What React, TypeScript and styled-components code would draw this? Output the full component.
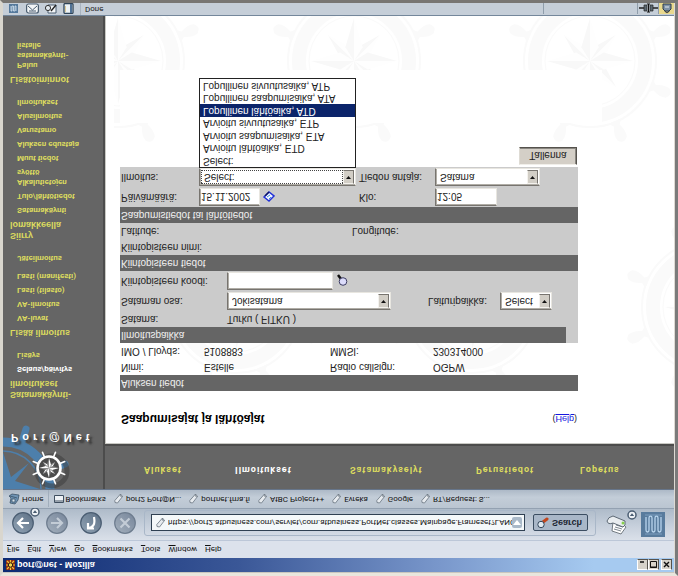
import React from "react";
import styled, { createGlobalStyle, css } from "styled-components";

const GlobalStyle = createGlobalStyle`
  * { box-sizing: border-box; }
  html, body { margin: 0; padding: 0; background: #808080; }
  body, button, input, select { font-family: "Liberation Sans", Arial, sans-serif; }
`;

const chromeFont = css`
  font-family: Roboto, "Liberation Sans", sans-serif;
`;

/* ---------- window ---------- */
const Window = styled.div`
  display: flex;
  flex-direction: column;
  min-height: 100vh;
  transform: scaleY(-1);
  background: #d8d5cd;
  border: 3px solid;
  border-color: #e9e6dd #7b7b7b #787673 #d9d6ce;
  box-shadow: inset -1px 0 #dedad4, inset 0 1px #c9c6be;
  padding: 1px 1px 0 0;
  font-size: 8px;
  line-height: 12px;
  color: #222;
`;

const TitleBar = styled.header`
  display: flex;
  align-items: center;
  height: 14px;
  padding: 0 2px 0 3px;
  background: linear-gradient(90deg, #0d2a72, #3a5797 35%, #7997cb 65%, #a6caf0 88%);
  color: #fff;
`;
const TitleText = styled.h1`
  flex: 1;
  margin: 0 0 0 2px;
  font-size: 9px;
  line-height: 12px;
  font-weight: 700;
`;
const CaptionButton = styled.button<{ $gap?: boolean }>`
  width: 11px;
  height: 11px;
  padding: 0;
  margin-left: ${(p) => (p.$gap ? 2 : 0)}px;
  border: 1px solid;
  border-color: #fff #55524d #55524d #fff;
  background: #d6d2ca;
  svg { display: block; }
`;

const MenuBar = styled.nav`
  display: flex;
  align-items: center;
  gap: 8px;
  height: 18px;
  padding-left: 4px;
  background: #dce2ec;
  border-bottom: 1px solid #bcc7d8;
`;
const MenuButton = styled.button`
  ${chromeFont}
  padding: 0;
  border: 0;
  background: none;
  color: #111;
  font-size: 8px;
  line-height: 12px;
  &::first-letter { text-decoration: underline; }
`;

const ToolBar = styled.div`
  display: flex;
  align-items: center;
  height: 32px;
  padding: 0 9px 0 8px;
  background: linear-gradient(#dae0e9, #c7d0dc 45%, #aebbc9);
  border-bottom: 1px solid #93a1b1;
`;
const RoundButton = styled.button`
  display: block;
  width: 24px;
  height: 24px;
  margin: 2px 10px 0 0;
  padding: 0;
  border: 0;
  background: none;
  svg { display: block; overflow: visible; }
`;
const AddressGroup = styled.form`
  display: flex;
  flex: 1;
  align-items: center;
  gap: 8px;
  height: 26px;
  margin: 3px 0 0 -3px;
  padding: 0 7px 0 6px;
  border: 1px solid #a9b7c8;
  border-radius: 3px;
`;
const AddressBox = styled.div`
  display: flex;
  flex: 1;
  align-items: center;
  height: 17px;
  padding: 0 2px 0 3px;
  border: 1px solid #2f4052;
  background: #f4f8fa;
`;
const AddressInput = styled.input`
  ${chromeFont}
  flex: 1;
  min-width: 0;
  height: 13px;
  margin-left: 2px;
  padding: 0;
  border: 0;
  outline: 0;
  background: none;
  color: #111;
  font-size: 8px;
`;
const DropButton = styled.button`
  width: 10px;
  height: 11px;
  padding: 0;
  border: 0;
  border-radius: 2px;
  background: #a9b9c9;
  svg { display: block; margin: auto; }
`;
const SearchButton = styled.button`
  display: flex;
  align-items: center;
  gap: 3px;
  width: 55px;
  height: 17px;
  padding: 0 3px;
  border: 1px solid #3b4d61;
  border-radius: 2px;
  background: #a9b7c8;
  color: #1a2430;
  font-size: 9px;
  font-weight: 700;
`;
const PrintButton = styled(RoundButton)`
  width: 32px;
  margin: 2px 4px 0 9px;
`;
const Throbber = styled.a`
  display: block;
  width: 24px;
  height: 25px;
  background: #587b9d;
  svg { display: block; }
`;

const BookmarkBar = styled.nav`
  ${chromeFont}
  display: flex;
  align-items: center;
  height: 19px;
  padding-left: 5px;
  background: linear-gradient(#bac5d1, #c3cdd8 60%, #adb9c7);
  border-bottom: 1px solid #66758a;
`;
const BookmarkLink = styled.a`
  display: flex;
  align-items: center;
  gap: 2px;
  margin-right: 7px;
  color: #111;
  text-decoration: none;
  white-space: nowrap;
`;
const HomeLink = styled(BookmarkLink)`
  height: 17px;
  margin-right: 5px;
  padding-right: 4px;
  border-right: 1px solid #a1aebc;
`;

const StatusBar = styled.footer`
  ${chromeFont}
  display: flex;
  align-items: center;
  height: 13px;
  padding-left: 5px;
  border-top: 1px solid #74879b;
  background: #c5ced8;
`;
const StatusButton = styled.button`
  display: block;
  width: 13px;
  height: 11px;
  margin-right: 5px;
  padding: 0;
  border: 0;
  background: none;
  svg { display: block; }
`;
const StatusText = styled.div`
  flex: 1;
  padding-left: 4px;
  border-left: 1px solid #a9b4c0;
`;
const StatusCell = styled.div<{ $width: number; $lit?: boolean }>`
  width: ${(p) => p.$width}px;
  height: 11px;
  border-left: 1px solid #8f9dab;
  background: ${(p) => (p.$lit ? "#e9d98e" : "none")};
  svg { display: block; margin: 0 auto; }
`;

/* ---------- page ---------- */
const Page = styled.div`
  display: grid;
  grid-template-columns: 102px 1fr;
  flex: 1;
  background: #656565;
`;
const SideBar = styled.aside`
  position: relative;
  overflow: hidden;
  border-right: 2px solid #4c4c4c;
`;
const BlueWheel = styled.svg`
  position: absolute;
  left: 0;
  top: 0;
`;
const LogoMark = styled.svg`
  position: relative;
  display: block;
  margin: 0 0 0 25px;
`;
const Brand = styled.div`
  position: relative;
  padding-left: 8px;
  color: #fff;
  font-size: 11px;
  line-height: 16px;
  font-weight: 700;
  letter-spacing: 4px;
  white-space: nowrap;
  text-shadow: 3px -3px 2px #333;
`;
const SideNav = styled.nav`
  padding: 30px 0 0 7px;
  font-weight: 700;
`;
const SideHead = styled.h2`
  margin: 0 0 2px;
  color: #dcdb5f;
  font-size: 9px;
  line-height: 11px;
`;
const SideList = styled.ul`
  margin: 0 0 10px;
  padding: 0 0 0 7px;
  list-style: none;
`;
const SideItem = styled.li<{ $apart?: boolean }>`
  ${chromeFont}
  margin-top: ${(p) => (p.$apart ? 4 : 0)}px;
  padding: 2px 0;
  font-size: 8px;
  line-height: 10px;
`;
const SideLink = styled.a<{ $current?: boolean }>`
  color: ${(p) => (p.$current ? "#fff" : "#dcdb5f")};
  text-decoration: none;
`;

const Content = styled.div`
  display: flex;
  flex-direction: column;
`;
const TopNav = styled.nav`
  display: grid;
  grid-template-columns: 91fr 115fr 126fr 104fr 94fr;
  align-items: center;
  height: 45px;
  padding: 0 0 6px 39px;
  border-bottom: 2px solid #4c4c4c;
`;
const TopLink = styled.a<{ $current?: boolean }>`
  ${chromeFont}
  color: ${(p) => (p.$current ? "#fff" : "#dcdb5f")};
  font-size: 9px;
  font-weight: 700;
  letter-spacing: 1px;
  text-decoration: none;
`;
const Main = styled.main`
  position: relative;
  flex: 1;
  overflow: hidden;
  border: solid #c9c9c4;
  border-width: 1px 0 0 1px;
  padding: 16px 16px 40px 14px;
  background: #fff;
  color: #222;
  font-size: 10px;
  line-height: 16px;
`;
const Watermark = styled.svg`
  position: absolute;
  left: 0;
  top: 0;
`;
const Sheet = styled.div`
  position: relative;
  max-width: 458px;
`;
const SheetHead = styled.div`
  display: flex;
  justify-content: space-between;
  margin-bottom: 20px;
  padding: 0 1px;
`;
const SheetTitle = styled.h2`
  margin: 0;
  color: #000;
  font-size: 12px;
  line-height: 16px;
`;
const Help = styled.span`
  font-size: 9px;
  a { color: #1616e0; }
`;
const Group = styled.section<{ $filled?: boolean }>`
  background: ${(p) => (p.$filled ? "#cbcbcb" : "none")};
`;
const GroupTitle = styled.h3<{ $short?: boolean }>`
  margin: 0 ${(p) => (p.$short ? 12 : 0)}px 0 0;
  padding-left: 1px;
  background: #656565;
  color: #f0f0f0;
  font-size: 10px;
  line-height: 16px;
  font-weight: 400;
`;
const Row = styled.div<{ $cols: string; $tall?: boolean }>`
  display: grid;
  grid-template-columns: ${(p) => p.$cols};
  align-items: center;
  height: ${(p) => (p.$tall ? 20 : 16)}px;
  padding-left: 1px;
`;
const Field = styled.div`
  position: relative;
  display: flex;
  align-items: center;
  gap: 3px;
`;
const sunken = css`
  border: 1px solid;
  border-color: #77746f #e8e6e0 #e8e6e0 #77746f;
  box-shadow: inset 1px 1px #b0ada6;
  border-radius: 0;
  background: #fff;
  color: #222;
  font-size: 10px;
`;
const TextInput = styled.input<{ $width: number }>`
  ${sunken}
  width: ${(p) => p.$width}px;
  height: 18px;
  padding: 0 1px;
`;
const SelectBox = styled.span<{ $width: number }>`
  ${sunken}
  display: flex;
  width: ${(p) => p.$width}px;
  height: 18px;
  padding: 1px;
`;
const NativeSelect = styled.select<{ $focused?: boolean }>`
  appearance: none;
  flex: 1;
  min-width: 0;
  height: 14px;
  padding: 0 2px;
  border: ${(p) => (p.$focused ? "1px dotted #444" : "1px solid #fff")};
  border-radius: 0;
  outline: 0;
  background: #fff;
  color: #222;
  font-size: 10px;
  line-height: 12px;
`;
const Arrow = styled.span`
  display: grid;
  place-items: center;
  width: 11px;
  height: 14px;
  border: 1px solid;
  border-color: #f4f2ee #77746f #77746f #f4f2ee;
  background: #d2cec6;
`;
const Options = styled.ul`
  position: absolute;
  z-index: 2;
  left: 0;
  top: 18px;
  display: grid;
  grid-template-rows: repeat(7, 1fr);
  width: 157px;
  height: 90px;
  margin: 0;
  padding: 0;
  border: 1px solid #222;
  background: #fff;
  list-style: none;
  line-height: 12px;
`;
const Option = styled.li<{ $active?: boolean }>`
  padding-left: 3px;
  background: ${(p) => (p.$active ? "#0b246a" : "none")};
  color: ${(p) => (p.$active ? "#fff" : "#222")};
  white-space: nowrap;
`;
const Actions = styled.div`
  display: flex;
  justify-content: flex-end;
  padding: 2px 1px 0 0;
`;
const SaveButton = styled.button`
  width: 58px;
  height: 18px;
  padding: 0;
  border: 1px solid;
  border-color: #f1efea #55524d #55524d #dedbd4;
  box-shadow: inset -1px -1px #8a8781;
  background: #d4cfc7;
  color: #222;
  font-size: 10px;
`;
const IconButton = styled.button`
  display: block;
  width: 12px;
  height: 13px;
  padding: 0;
  border: 0;
  background: none;
  svg { display: block; }
`;

/* ---------- drawings ---------- */
const ANGLES = [22.5, 67.5, 112.5, 157.5, 202.5, 247.5, 292.5, 337.5];

function Star({ r, light, dark }: { r: number; light: string; dark: string }) {
  return (
    <g>
      {[45, 135, 225, 315, 0, 90, 180, 270].map((a) => {
        const s = a % 90 ? r * 0.86 : r;
        return (
          <g key={a} transform={`rotate(${a})`}>
            <path d={`M0 0L${s * 0.2} ${-s * 0.32}L0 ${-s}Z`} fill={dark} />
            <path d={`M0 0L${-s * 0.2} ${-s * 0.32}L0 ${-s}Z`} fill={light} />
          </g>
        );
      })}
    </g>
  );
}

function Wheel({ x, y }: { x: number; y: number }) {
  const c = "#fafafa";
  return (
    <g transform={`translate(${x} ${y})`}>
      <circle r="66" fill="none" stroke={c} strokeWidth="2" />
      <circle r="55" fill="none" stroke={c} strokeWidth="14" />
      <circle r="45" fill="none" stroke={c} strokeWidth="1" />
      <Star r={43} light="#fefefe" dark="#f8f8f8" />
      {ANGLES.map((a) => (
        <path key={a} transform={`rotate(${a})`} fill={c}
          d="M-7 -65L7 -65L3 -70Q7 -78 5 -84Q0 -90 -5 -84Q-7 -78 -3 -70Z" />
      ))}
    </g>
  );
}

function PageWatermark() {
  return (
    <Watermark width="569" height="430" viewBox="0 0 569 430" aria-hidden="true">
      <defs>
        <clipPath id="sheetArea"><rect x="8" y="0" width="561" height="430" /></clipPath>
      </defs>
      <g clipPath="url(#sheetArea)">
        {[12, 248, 484].map((x) => <Wheel key={x} x={x} y={382} />)}
        {[130, 366, 602].map((x) => <Wheel key={x} x={x} y={136} />)}
        <rect x="14" y="320" width="482" height="53" fill="#fff" />
      </g>
    </Watermark>
  );
}

const ArrowDown = () => (
  <svg width="7" height="4" viewBox="0 0 7 4" aria-hidden="true"><path d="M1 0h5L3.5 3z" fill="#111" /></svg>
);

const PageIcon = () => (
  <svg width="11" height="11" viewBox="0 0 11 11" aria-hidden="true">
    <path d="M2 1.5L4.5 1L9.5 7.5L7.5 10L1.8 3.5Z" fill="#e7ebef" stroke="#68747f" strokeWidth=".8" />
    <path d="M7.5 10L7.3 7.8L9.5 7.5" fill="none" stroke="#68747f" strokeWidth=".7" />
  </svg>
);

function Orb({ children, dim }: { children: React.ReactNode; dim?: boolean }) {
  return (
    <svg width="24" height="24" viewBox="0 0 24 24" aria-hidden="true">
      <defs>
        <linearGradient id={dim ? "orbDim" : "orbLit"} x1="0" y1="0" x2="1" y2="1">
          <stop offset="0" stopColor={dim ? "#a4b0bd" : "#93a5b6"} />
          <stop offset="1" stopColor={dim ? "#76859a" : "#5d7085"} />
        </linearGradient>
      </defs>
      <circle cx="12" cy="12" r="10.3" fill={`url(#${dim ? "orbDim" : "orbLit"})`}
        stroke={dim ? "#6d7c8e" : "#4a5d72"} strokeWidth="1.2" />
      {children}
    </svg>
  );
}

const glyph = (color: string) => ({ fill: "none", stroke: color, strokeWidth: 2.2 });

function LogoWheel() {
  return (
    <LogoMark width="42" height="43" viewBox="-21 -21 42 43" aria-hidden="true">
      <circle cx="3" cy="-3" r="15" fill="none" stroke="#3a3a3a" strokeWidth="5" opacity=".5" />
      <circle r="11.5" fill="#4b4b4b" stroke="#fff" strokeWidth="2.6" />
      {ANGLES.map((a) => (
        <path key={a} transform={`rotate(${a})`} d="M0 -12V-17" stroke="#fff" strokeWidth="1.6" strokeLinecap="round" />
      ))}
      <Star r={10} light="#fff" dark="#8b8b8b" />
    </LogoMark>
  );
}

/* ---------- data ---------- */
const menus = ["File", "Edit", "View", "Go", "Bookmarks", "Tools", "Window", "Help"];
const bookmarks = ["port2 Port@N...", "portnet.fma.fi", "AtBC Project++", "Evreka", "Google", "RT/Request: S..."];
const topLinks = ["Alukset", "Ilmoitukset", "Satamakyselyt", "Perustiedot", "Lopetus"];
const options = [
  "Select:", "Arvioitu lähtöaika, ETD", "Arvioitu saapumisaika, ETA", "Arvioitu sivuutusaika, ETP",
  "Lopullinen lähtöaika, ATD", "Lopullinen saapumisaika, ATA", "Lopullinen sivuutusaika, ATP",
];
const sections = [
  { head: ["Satamakäynti-", "ilmoitukset"], items: [["Selaus/päivitys"], ["Lisäys"]] },
  { head: ["Lisää ilmoitus"], items: [["VA-luvat"], ["VA-ilmoitus"], ["Lasti (tilasto)"], ["Lasti (manifesti)"], ["Jäteilmoitus"]] },
  {
    head: ["Siirry", "lomakkeella"],
    items: [["Satamakäynti"], ["Tulo/lähtötiedot"], ["Alkalutietojen", "syöttö"], ["Muut tiedot"],
      ["Aluksen edustaja"], ["Varustamo"], ["Alusilmoitus"], ["Ilmoitukset"]],
  },
  { head: ["Lisätoiminnot"], items: [["Paluu", "satamakäynti-", "listalle"]] },
];

function Lines({ text }: { text: string[] }) {
  return <>{text.map((t, i) => <React.Fragment key={t}>{i > 0 && <br />}{t}</React.Fragment>)}</>;
}

function Select({ id, width, value, focused }: { id: string; width: number; value: string; focused?: boolean }) {
  return (
    <SelectBox $width={width}>
      <NativeSelect id={id} $focused={focused} defaultValue={value}><option>{value}</option></NativeSelect>
      <Arrow><ArrowDown /></Arrow>
    </SelectBox>
  );
}

function Chrome() {
  return (
    <>
      <TitleBar>
        <svg width="9" height="10" viewBox="0 0 9 10" aria-hidden="true">
          <path d="M0 0h9v10H0z" fill="#8d2a18" />
          <path d="M1 1l2 2M8 1L6 3M1 9l2-2M8 9L6 7M4.5 0v10M0 5h9" stroke="#f3c531" strokeWidth="1.2" />
          <circle cx="4.5" cy="5" r="2.2" fill="#f3d751" stroke="#2b1a10" />
        </svg>
        <TitleText>port@net - Mozilla</TitleText>
        <CaptionButton aria-label="Minimize"><svg width="9" height="9"><path d="M2 7h4" stroke="#111" strokeWidth="1.5" /></svg></CaptionButton>
        <CaptionButton aria-label="Maximize"><svg width="9" height="9"><path d="M1.5 1.5h6v6h-6zM1 2h7" stroke="#111" fill="none" /></svg></CaptionButton>
        <CaptionButton aria-label="Close" $gap><svg width="9" height="9"><path d="M2 2l5 5M7 2L2 7" stroke="#111" strokeWidth="1.4" /></svg></CaptionButton>
      </TitleBar>
      <MenuBar>{menus.map((m) => <MenuButton key={m}>{m}</MenuButton>)}</MenuBar>
      <ToolBar>
        <RoundButton aria-label="Back">
          <Orb>
            <path d="M18 12H7M12 7l-5 5 5 5" {...glyph("#fff")} />
            <circle cx="24" cy="23" r="4" fill="#eef2f6" stroke="#4a5d72" strokeWidth="1.5" />
            <path d="M21.8 22h4.4L24 24.8z" fill="#4a5d72" />
          </Orb>
        </RoundButton>
        <RoundButton aria-label="Forward"><Orb dim><path d="M6 12h11M12 7l5 5-5 5" {...glyph("#c3ccd6")} /></Orb></RoundButton>
        <RoundButton aria-label="Reload"><Orb><path d="M15 18Q16 12 14.5 10Q13 7 9 7M9 12V6.500h6" {...glyph("#fff")} /></Orb></RoundButton>
        <RoundButton aria-label="Stop"><Orb dim><path d="M7.5 7.5l9 9M16.5 7.5l-9 9" {...glyph("#c3ccd6")} /></Orb></RoundButton>
        <AddressGroup onSubmit={(e) => e.preventDefault()}>
          <AddressBox>
            <PageIcon />
            <AddressInput aria-label="Address"
              defaultValue="https://port2.atbusiness.com/servlet/com.atbusiness.PortNet.classes.Mainpage.Frameset?LANG" />
            <DropButton type="button" aria-label="History"><svg width="8" height="5"><path d="M0 0h8L4 5z" fill="#fff" /></svg></DropButton>
          </AddressBox>
          <SearchButton>
            <svg width="12" height="12" viewBox="0 0 12 12" aria-hidden="true">
              <path d="M6 7l4 3" stroke="#c2451c" strokeWidth="3" strokeLinecap="round" />
              <circle cx="4" cy="4.5" r="3.2" fill="#dfe9f2" stroke="#33465a" />
            </svg>
            Search
          </SearchButton>
        </AddressGroup>
        <PrintButton aria-label="Print">
          <svg width="32" height="24" viewBox="0 0 32 24" aria-hidden="true">
            <path d="M7 4L16 1L21 8L14 14L8 13Z" fill="#fff" stroke="#555e66" strokeWidth=".8" />
            <path d="M9 6l7-2M10 8l7-2M11 10l7-2" stroke="#7d8790" />
            <path d="M2 14Q3 10 8 12L18 8Q21 9 20 14L8 19Q3 18 2 14Z" fill="#e9edf0" stroke="#4e5a66" strokeWidth=".9" />
            <circle cx="18" cy="12" r="1.5" fill="#86d04c" />
            <circle cx="27" cy="20" r="4" fill="#eef2f6" stroke="#4a5d72" strokeWidth="1.5" />
            <path d="M24.8 19h4.4L27 21.8z" fill="#4a5d72" />
          </svg>
        </PrintButton>
        <Throbber href="#" aria-label="Mozilla">
          <svg width="24" height="25" viewBox="0 0 24 25">
            <path d="M5 20V7Q5 5 6.5 5T8 7V19Q8 21 9.5 21T11 19V7Q11 5 12.5 5T14 7V19Q14 21 15.5 21T17 19V7Q17 5 18.5 5T20 7V20"
              fill="none" stroke="#b9d5ee" strokeWidth="1.3" />
            <path d="M4 22h17M4 3h17" stroke="#7d9fbf" />
          </svg>
        </Throbber>
      </ToolBar>
      <BookmarkBar>
        <HomeLink href="#">
          <svg width="12" height="12" viewBox="0 0 12 12" aria-hidden="true">
            <path d="M1 9L4 11L11 10L10 5L7 1L2 2L3 7Z" fill="#6f93b3" stroke="#31475c" strokeWidth=".7" />
            <path d="M4 3h3v3H4zM2 9l7-2" fill="#d5e3ee" stroke="#31475c" strokeWidth=".7" />
          </svg>
          Home
        </HomeLink>
        <BookmarkLink href="#">
          <svg width="10" height="10" viewBox="0 0 10 10" aria-hidden="true">
            <path d="M.5 1.5h9v7h-9z" fill="#eef2f6" stroke="#3f4f60" /><path d="M1 3h8" stroke="#3f4f60" />
          </svg>
          Bookmarks
        </BookmarkLink>
        {bookmarks.map((b) => <BookmarkLink href="#" key={b}><PageIcon />{b}</BookmarkLink>)}
      </BookmarkBar>
    </>
  );
}

function Status() {
  return (
    <StatusBar>
      <StatusButton aria-label="Navigator"><svg width="11" height="11"><path d="M1 1h9v9H1z" fill="#55799c" /><path d="M3 8V3h1v5h1.5V3H7v5h1V3" fill="none" stroke="#d5e4f1" strokeWidth=".8" /></svg></StatusButton>
      <StatusButton aria-label="Mail"><svg width="13" height="11"><rect x=".6" y="1" width="11.8" height="9" rx="2" fill="#f2f5f7" stroke="#4a5d70" strokeWidth="1.2" /><path d="M2 8l4.5-4L11 8M3 3h7" fill="none" stroke="#4a5d70" /></svg></StatusButton>
      <StatusButton aria-label="Composer"><svg width="14" height="11"><path d="M4 1h8v8H4z" fill="#f2f5f7" stroke="#4a5d70" /><path d="M7 3l5 6" stroke="#222" strokeWidth="1.4" /><circle cx="4" cy="6" r="2.6" fill="#dfe6ec" stroke="#333" /></svg></StatusButton>
      <StatusButton aria-label="Address book"><svg width="13" height="11"><rect x="2" y=".6" width="9" height="9.8" rx="1" fill="#edf3f7" stroke="#2f4458" strokeWidth="1.3" /><path d="M9 1v9" stroke="#507296" strokeWidth="2" /><path d="M3 3h1M3 5h1M3 7h1" stroke="#c9a33a" /></svg></StatusButton>
      <StatusText>Done</StatusText>
      <StatusCell $width={94} />
      <StatusCell $width={21}><svg width="19" height="11"><path d="M0 6h6M13 6h6" stroke="#222" strokeWidth="1.5" /><path d="M5 3h3v6H5zM11 3h3v6h-3z" fill="#5d6972" stroke="#222" strokeWidth=".7" /><path d="M9.5 2v8M8 2h3M8 10h3" stroke="#111" /></svg></StatusCell>
      <StatusCell $width={16} $lit><svg width="12" height="11"><path d="M4 5V3Q6 0 8 3V5" fill="none" stroke="#444" strokeWidth="1.3" /><path d="M2 10h8V5L8 3H4L2 5z" fill="#7f92a6" stroke="#2c3b4a" /><path d="M4 7h4" stroke="#e5eaf0" /></svg></StatusCell>
    </StatusBar>
  );
}

const detailCols = "83px 126px 103px 1fr";
const timeCols = "78px 160px 76px 1fr";

export default function App() {
  return (
    <>
      <GlobalStyle />
      <Window>
        <Chrome />
        <Page>
          <SideBar>
            <BlueWheel width="80" height="72" viewBox="0 0 80 72" aria-hidden="true">
              <g fill="none" stroke="#4d7fab">
                <circle cx="0" cy="0" r="47" strokeWidth="9" />
                <circle cx="0" cy="0" r="38" strokeWidth="1.5" />
                <path d="M18 44L23 60M47 19L62 25" strokeWidth="7" strokeLinecap="round" />
              </g>
              <path d="M0 0L8 12L26 26L12 8L37 0ZM0 0L0 37L8 12Z" fill="#4d7fab" />
            </BlueWheel>
            <LogoWheel />
            <Brand>Port@Net</Brand>
            <SideNav>
              {sections.map((s) => (
                <React.Fragment key={s.head[0]}>
                  <SideHead><Lines text={s.head} /></SideHead>
                  <SideList>
                    {s.items.map((item) => (
                      <SideItem key={item[0]} $apart={item[0] === "Jäteilmoitus"}>
                        <SideLink href="#" $current={item[0] === "Selaus/päivitys"}><Lines text={item} /></SideLink>
                      </SideItem>
                    ))}
                  </SideList>
                </React.Fragment>
              ))}
            </SideNav>
          </SideBar>
          <Content>
            <TopNav>
              {topLinks.map((t) => <TopLink key={t} href="#" $current={t === "Ilmoitukset"}>{t}</TopLink>)}
            </TopNav>
            <Main>
              <PageWatermark />
              <Sheet>
                <SheetHead>
                  <SheetTitle>Saapumisajat ja lähtöajat</SheetTitle>
                  <Help>(<a href="#">Help</a>)</Help>
                </SheetHead>
                <Group>
                  <GroupTitle>Aluksen tiedot</GroupTitle>
                  <Row $cols={detailCols}><span>Nimi:</span><span>Estelle</span><span>Radio callsign:</span><span>OGPW</span></Row>
                  <Row $cols={detailCols}><span>IMO / Lloyds:</span><span>5108883</span><span>MMSI:</span><span>230314000</span></Row>
                </Group>
                <Group $filled>
                  <GroupTitle $short>Ilmoituspaikka</GroupTitle>
                  <Row $cols="106px 1fr"><span>Satama:</span><span>Turku ( FITKU )</span></Row>
                  <Row $cols="106px 201px 72px 1fr" $tall>
                    <label htmlFor="osa">Sataman osa:</label>
                    <Field><Select id="osa" width={164} value="Jokisatama" /></Field>
                    <label htmlFor="laituri">Laituripaikka:</label>
                    <Field><Select id="laituri" width={52} value="Select" /></Field>
                  </Row>
                  <Row $cols="106px 1fr" $tall>
                    <label htmlFor="koodi">Kiintopisteen koodi:</label>
                    <Field>
                      <TextInput id="koodi" $width={106} />
                      <IconButton aria-label="Hae">
                        <svg width="12" height="13" viewBox="0 0 12 13"><path d="M2 12l3-4" stroke="#111" strokeWidth="2.5" /><circle cx="7" cy="5.5" r="3.8" fill="#dcdcfb" stroke="#3c3c62" /></svg>
                      </IconButton>
                    </Field>
                  </Row>
                </Group>
                <Group $filled>
                  <GroupTitle>Kiintopisteen tiedot</GroupTitle>
                  <Row $cols="1fr"><span>Kiintopisteen nimi:</span></Row>
                  <Row $cols="231px 1fr"><span>Latitude:</span><span>Longitude:</span></Row>
                </Group>
                <Group $filled>
                  <GroupTitle>Saapumistiedot tai lähtötiedot</GroupTitle>
                  <Row $cols={timeCols} $tall>
                    <label htmlFor="pvm">Päivämäärä:</label>
                    <Field>
                      <TextInput id="pvm" $width={61} defaultValue="15.11.2002" />
                      <IconButton aria-label="Kalenteri">
                        <svg width="12" height="13" viewBox="0 0 12 13"><path d="M1 6l5-4 5 5-5 4z" fill="#f3f6ff" stroke="#2030d8" strokeWidth="1.5" /><path d="M2 7l4 4" stroke="#0d1560" strokeWidth="1.5" /><path d="M4 6l3 2M6 4l2 2" stroke="#3c8ee0" /></svg>
                      </IconButton>
                    </Field>
                    <label htmlFor="klo">Klo:</label>
                    <Field><TextInput id="klo" $width={62} defaultValue="12:05" /></Field>
                  </Row>
                  <Row $cols={timeCols} $tall>
                    <label htmlFor="ilmoitus">Ilmoitus:</label>
                    <Field>
                      <Select id="ilmoitus" width={157} value="Select:" focused />
                      <Options role="listbox" aria-label="Ilmoitus">
                        {options.map((o, i) => <Option key={o} role="option" aria-selected={i === 4} $active={i === 4}>{o}</Option>)}
                      </Options>
                    </Field>
                    <label htmlFor="antaja">Tiedon antaja:</label>
                    <Field><Select id="antaja" width={105} value="Satama" /></Field>
                  </Row>
                </Group>
                <Actions><SaveButton>Tallenna</SaveButton></Actions>
              </Sheet>
            </Main>
          </Content>
        </Page>
        <Status />
      </Window>
    </>
  );
}
